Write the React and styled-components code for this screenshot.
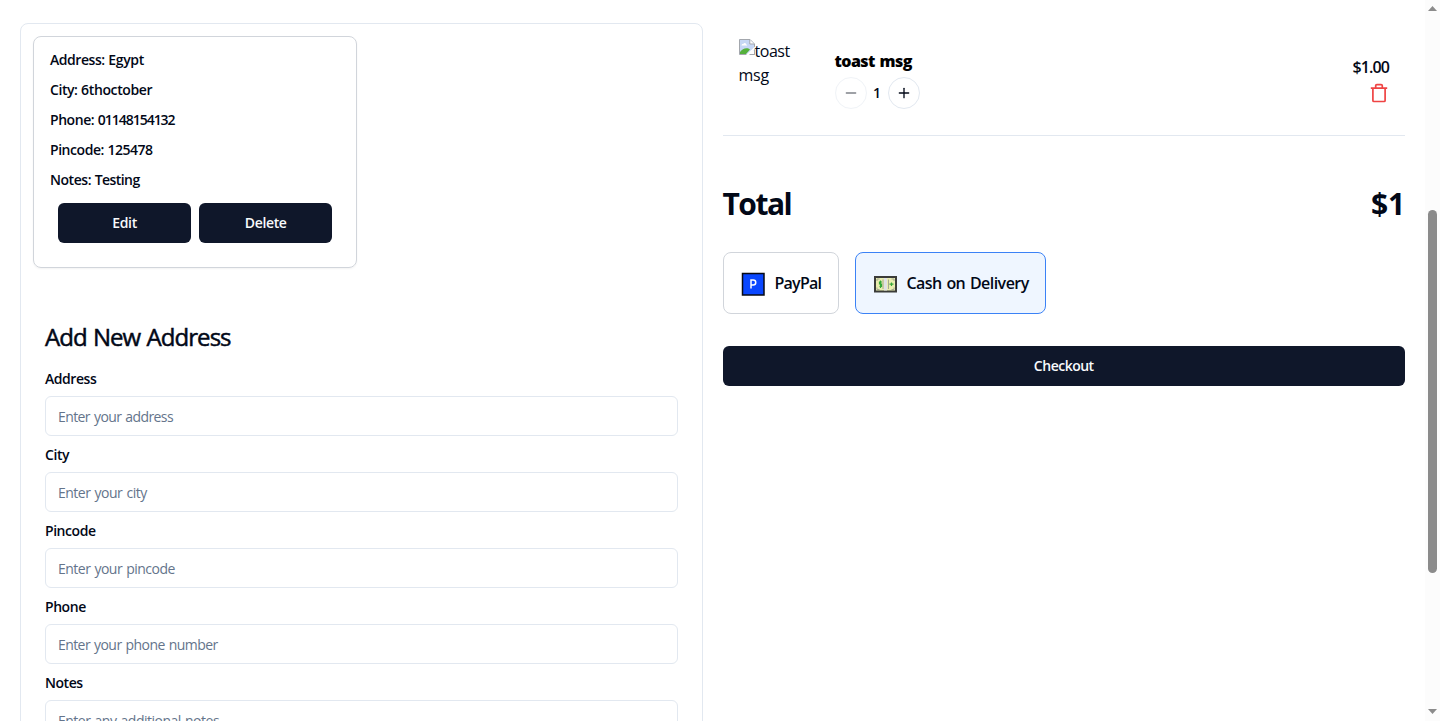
import React from "react";
import styled, { createGlobalStyle } from "styled-components";
import { Minus, Plus } from "lucide-react";

const GlobalStyle = createGlobalStyle`
  *, *::before, *::after { box-sizing: border-box; }
  html, body { margin: 0; height: 100%; overflow: hidden; }
  body {
    background: #fff;
    color: #020817;
    font-family: "Segoe UI", "Open Sans", "Noto Sans", sans-serif;
    font-size: 16px;
    line-height: 24px;
  }
  h2, h3, p { margin: 0; }
  button, input { font-family: inherit; }
`;

const Page = styled.div`
  display: grid;
  grid-template-columns: 1fr 15px;
  height: 721px;
  overflow: hidden;
`;

const Columns = styled.main`
  display: grid;
  grid-template-columns: 1fr 1fr;
  gap: 20px;
  padding: 23px 20px 0;
  height: 721px;
  overflow: hidden;
`;

const T = styled.span`
  letter-spacing: ${(p) => p.$ls || 0}px;
  word-spacing: ${(p) => p.$ws || 0}px;
  white-space: nowrap;
`;

const AddressPanel = styled.section`
  height: 820px;
  border: 1px solid #e2e8f0;
  border-radius: 8px;
`;

const AddressGrid = styled.div`
  display: grid;
  grid-template-columns: 1fr 1fr;
  gap: 8px;
  padding: 12px;
  margin-bottom: 20px;
`;

const AddressCard = styled.article`
  height: 232px;
  border: 1px solid #d1d5db;
  border-radius: 8px;
  box-shadow: 0 1px 2px rgba(0, 0, 0, 0.05);
`;

const AddressLines = styled.div`
  display: grid;
  gap: 16px;
  padding: 16px;
  font-size: 14px;
  font-weight: 600;
  line-height: 14px;
`;

const CardActions = styled.div`
  display: grid;
  grid-template-columns: 1fr 1fr;
  gap: 8px;
  padding: 0 24px 24px;
`;

const Button = styled.button`
  height: 40px;
  width: 100%;
  padding: 0;
  border: 0;
  border-radius: 6px;
  background: #0f172a;
  color: #f8fafc;
  font-size: 14px;
  font-weight: 600;
  line-height: 20px;
`;

const FormArea = styled.div`
  padding: 24px;
`;

const FormTitle = styled.h2`
  font-size: 24px;
  font-weight: 400;
  line-height: 26px;
  margin-bottom: 22px;
  -webkit-text-stroke: 0.5px currentColor;
`;

const Fields = styled.form`
  display: grid;
  gap: 12px;
`;

const Field = styled.label`
  display: grid;
  gap: 10px;
  font-size: 14px;
  font-weight: 600;
  line-height: 14px;
`;

const Input = styled.input`
  height: 40px;
  width: 100%;
  padding: 0 12px;
  border: 1px solid #e2e8f0;
  border-radius: 6px;
  background: #fff;
  font-size: 14px;
  letter-spacing: ${(p) => p.$ls || 0}px;
  word-spacing: 1px;
  &::placeholder { color: #64748b; opacity: 1; }
`;

const Item = styled.div`
  display: flex;
  height: 113px;
  padding: 16px;
  gap: 16px;
  border-bottom: 1px solid #e2e8f0;
`;

const Thumb = styled.div`
  width: 80px;
  height: 80px;
  color: #020817;
  svg { display: inline-block; vertical-align: top; }
`;

const ItemInfo = styled.div`
  flex: 1;
  padding-top: 10px;
`;

const ItemName = styled.h3`
  font-size: 16px;
  font-weight: 800;
  line-height: 24px;
  color: #000;
`;

const Quantity = styled.div`
  display: flex;
  align-items: center;
  gap: 6.5px;
  margin-top: 4px;
  font-size: 14px;
  font-weight: 600;
`;

const RoundButton = styled.button`
  display: flex;
  align-items: center;
  justify-content: center;
  width: 32px;
  height: 32px;
  padding: 0;
  border: 1px solid #e2e8f0;
  border-radius: 50%;
  background: #fff;
  color: #020817;
  opacity: ${(p) => (p.disabled ? 0.5 : 1)};
`;

const ItemPrice = styled.div`
  display: flex;
  flex-direction: column;
  align-items: flex-end;
  gap: 4px;
  padding-top: 16px;
  font-weight: 600;
`;

const TotalRow = styled.div`
  display: flex;
  justify-content: space-between;
  margin-top: 50px;
  font-size: 30px;
  font-weight: 700;
  line-height: 36px;
`;

const Methods = styled.div`
  display: flex;
  gap: 16px;
  margin: 30px 0 32px;
`;

const Method = styled.button`
  display: flex;
  align-items: center;
  gap: 10px;
  width: ${(p) => p.$width}px;
  height: 62px;
  padding: 0 16px 0 17px;
  border: 1px solid ${(p) => (p.$active ? "#3b82f6" : "#d1d5db")};
  border-radius: 8px;
  background: ${(p) => (p.$active ? "#eff6ff" : "#fff")};
  color: #020817;
  font-size: 16px;
  font-weight: 600;
  svg { flex: none; margin-top: 1px; }
`;

const Scrollbar = styled.div`
  display: flex;
  flex-direction: column;
  align-items: center;
  justify-content: space-between;
  padding: 6px 0 7px;
  background: #fcfcfc;
`;

const ScrollHandle = styled.div`
  width: 9px;
  height: 363px;
  margin-top: 63px;
  border-radius: 5px;
  background: #8b8b8b;
`;

const BrokenImage = () => (
  <svg width="16" height="16" viewBox="0 0 16 16">
    <path d="M.5.5h10.500l4.500 4.500v10.500H.5z" fill="#c6d7f5" stroke="#a3a7ad" />
    <path d="M2.500 6.500c0-1.200 1-1.800 1.800-1.400.5-1.500 2.600-1.200 2.800.3.800 0 1.200.6 1 1.100z" fill="#fff" />
    <path d="M1 15v-2C3.500 9 8.500 8 11 10.500L7 15z" fill="#55b13c" />
    <path d="M7.500 16L12 11.500h3V16z" fill="#fff" />
    <path d="M7 16l9-8.500v2.500l-6 6z" fill="#fff" />
    <path d="M10.500 15.500h5v-5" fill="none" stroke="#a3a7ad" />
    <path d="M10.800.8V5h4.400" fill="#fff" stroke="#a3a7ad" />
  </svg>
);

const Trash = () => (
  <svg width="20" height="20" viewBox="0 0 20 20" fill="none" stroke="#ef4444" strokeWidth="1.700">
    <path d="M1.800 5.200h16.400M3.900 5.200v12.300q0 1 1 1h10.200q1 0 1-1V5.200M6.700 5V2.800q0-1.200 1.200-1.200h4.200q1.200 0 1.200 1.200V5" />
  </svg>
);

const PayPalIcon = () => (
  <svg width="24" height="24" viewBox="0 0 24 24">
    <path d="M1.500 1.500h21.500v21.500h-21.500z" fill="#0a47ff" stroke="#090b14" strokeWidth="1.500" />
    <path d="M10 16.500V8h2.300a2.400 2.400 0 0 1 0 4.900H10" fill="none" stroke="#fff" strokeWidth="1.500" />
  </svg>
);

const CashIcon = () => (
  <svg width="24" height="24" viewBox="0 0 24 24">
    <path d="M2 5h21v14.500H2z" fill="#e9edaf" stroke="#3b3c39" strokeWidth="2" />
    <path d="M4 9V7h2.500M18.500 7H21v2M4 15.500v2h2.500M18.500 17.500H21v-2M10 7.500v9.500M15.500 7.500v9.500" fill="none" stroke="#a5a991" />
    <path d="M7.500 8.500v7.500M9 10H6.500v2H8.500v2.500H6.500M16.500 12.200h4M18.500 10.500v3.500" fill="none" stroke="#35a83a" strokeWidth="1.200" />
    <path d="M11 6h3v12.500h-3z" fill="#dfe1e5" />
  </svg>
);

const lines = [
  ["Address: ", "Egypt", -0.37],
  ["City: ", "6thoctober", -0.37],
  ["Phone: ", "01148154132", -1.03],
  ["Pincode: ", "125478", -0.55],
  ["Notes: ", "Testing", -0.58],
];

const fields = [
  ["Address", "Enter your address", -0.6],
  ["City", "Enter your city", -0.5],
  ["Pincode", "Enter your pincode", -0.52],
  ["Phone", "Enter your phone number", -0.58],
  ["Notes", "Enter any additional notes", -0.5],
];

export default function App() {
  return (
    <>
      <GlobalStyle />
      <Page>
        <Columns>
          <AddressPanel>
            <AddressGrid>
              <AddressCard>
                <AddressLines>
                  {lines.map(([name, value, ls]) => (
                    <p key={name}><T $ls={-0.45} $ws={0.5}>{name}</T><T $ls={ls}>{value}</T></p>
                  ))}
                </AddressLines>
                <CardActions>
                  <Button><T $ls={-0.3}>Edit</T></Button>
                  <Button><T $ls={-0.35}>Delete</T></Button>
                </CardActions>
              </AddressCard>
            </AddressGrid>
            <FormArea>
              <FormTitle><T $ls={-0.95} $ws={1}>Add New Address</T></FormTitle>
              <Fields>
                {fields.map(([label, hint, hintLs]) => (
                  <Field key={label}>
                    <T $ls={-0.45}>{label}</T>
                    <Input placeholder={hint} $ls={hintLs} />
                  </Field>
                ))}
              </Fields>
            </FormArea>
          </AddressPanel>
          <section>
            <Item>
              <Thumb><BrokenImage /><T $ls={-0.45}>toast</T><br /><T $ls={-0.2}>msg</T></Thumb>
              <ItemInfo>
                <ItemName><T $ls={-0.55} $ws={1}>toast msg</T></ItemName>
                <Quantity>
                  <RoundButton disabled><Minus size={16} /></RoundButton>
                  <T>1</T>
                  <RoundButton><Plus size={16} /></RoundButton>
                </Quantity>
              </ItemInfo>
              <ItemPrice>
                <T $ls={-0.9}>$1.00</T>
                <Trash />
              </ItemPrice>
            </Item>
            <TotalRow>
              <T $ls={-1.5}>Total</T>
              <T $ls={-0.2}>$1</T>
            </TotalRow>
            <Methods>
              <Method $width={116}><PayPalIcon /><T $ls={-0.75}>PayPal</T></Method>
              <Method $width={191} $active><CashIcon /><T $ls={-0.53} $ws={1}>Cash on Delivery</T></Method>
            </Methods>
            <Button><T $ls={-0.5}>Checkout</T></Button>
          </section>
        </Columns>
        <Scrollbar>
          <svg width="9" height="5" viewBox="0 0 9 5"><path d="M4.500 0L9 5H0z" fill="#8b8b8b" /></svg>
          <ScrollHandle />
          <svg width="9" height="5" viewBox="0 0 9 5"><path d="M0 0h9L4.500 5z" fill="#8b8b8b" /></svg>
        </Scrollbar>
      </Page>
    </>
  );
}
